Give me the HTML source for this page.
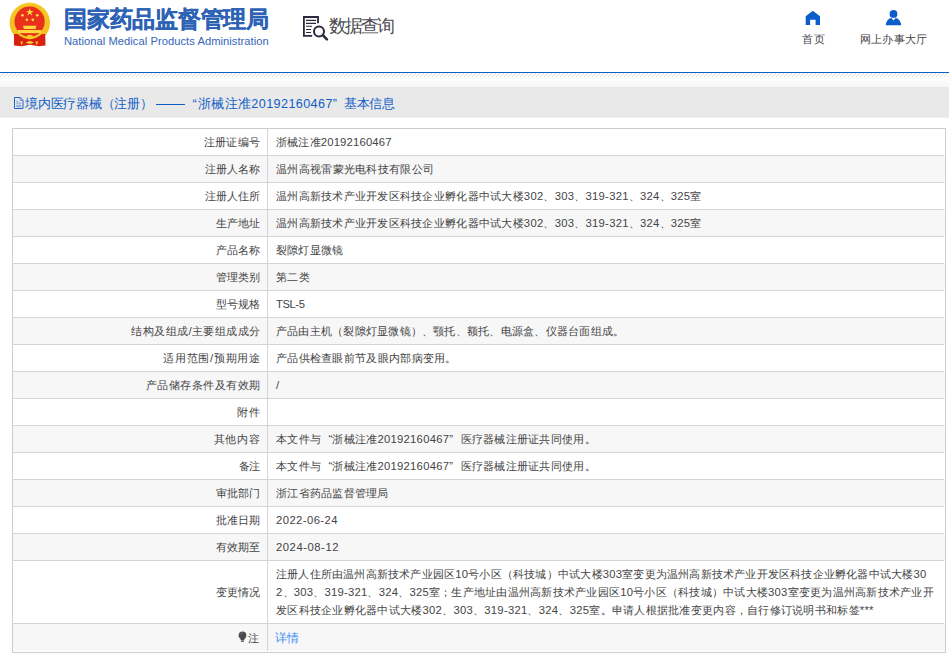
<!DOCTYPE html>
<html><head><meta charset="utf-8">
<style>
*{margin:0;padding:0;box-sizing:border-box}
html,body{width:949px;height:655px;overflow:hidden;background:#fff;font-family:"Liberation Sans",sans-serif}
div,svg{position:absolute}
.emblem{left:0;top:0}
.t1{left:64px;top:4px;-webkit-text-stroke:0.3px #2d62b5;font-size:22.5px;font-weight:bold;color:#2d62b5;white-space:nowrap;line-height:32px;letter-spacing:-0.250px;}
.t2{left:64px;top:34.2px;font-size:11.2px;color:#3466b9;white-space:nowrap;line-height:14px;letter-spacing:0.036px;}
.dq{left:302px;top:15px}
.dqt{left:328.8px;top:13.8px;font-size:18px;color:#4a4a50;white-space:nowrap;line-height:24px;letter-spacing:-1.900px;}
.nav{top:29.8px;font-size:11.25px;color:#444;white-space:nowrap;line-height:18px}
.blue{left:0;top:72px;width:949px;height:1px;background:#0d5fc0}
.stripe{left:0;top:73px;width:949px;height:4px}
.grad{left:0;top:77px;width:949px;height:10px;background:linear-gradient(#fff,#f6f6f6)}
.band{left:0;top:87px;width:949px;height:30px;background:#e9e9e9}
.bt{left:25px;top:94.7px;font-size:12.6px;color:#0f5ec7;white-space:nowrap;line-height:19px;}
.q1{margin-left:7.3px} .q2{margin-right:7.3px}
.bicon{left:13px;top:96px}
.bandb{left:0;top:117px;width:949px;height:1px;background:#eef0f6}
.tbl{left:12px;top:128px;width:934px;height:525px;border:1px solid #cdcccf;background:#fff}
.bg{left:13px;width:932px;background:#f7f7f7}
.hl{left:13px;width:931px;height:1px;background:#d4d4d6}
.vd{left:267px;top:129px;width:1px;height:522px;background:#d4d4d6}
.lb{right:689px;font-size:11.25px;line-height:18px;color:#444;white-space:nowrap;text-align:right}
.vl{left:276px;font-size:11.25px;line-height:18px;color:#444;white-space:nowrap}
.bulb{position:static;display:inline-block;margin-right:1px;vertical-align:0px}
</style></head><body>
<svg class="emblem" viewBox="0 0 60 50" width="60" height="50">
<defs><radialGradient id="gd" cx="50%" cy="35%" r="65%"><stop offset="0" stop-color="#ffd640"/><stop offset="1" stop-color="#f2bb1c"/></radialGradient></defs>
<circle cx="29.8" cy="22.8" r="20.2" fill="url(#gd)"/>
<path d="M14 34 L45.2 34 L45.5 45.6 L38.5 46.2 L30 44.8 L21.5 46.2 L14 45.6 Z" fill="#d8210f"/>
<circle cx="29.7" cy="21.8" r="17.2" fill="#f3c21e"/>
<circle cx="29.6" cy="21.6" r="15.1" fill="#e8301d"/>
<g fill="#ffd83c">
<polygon points="29.8,8.2 30.75,10.9 33.6,10.9 31.3,12.6 32.2,15.4 29.8,13.7 27.4,15.4 28.3,12.6 26,10.9 28.85,10.9"/>
<circle cx="22.4" cy="15.3" r="1.35"/><circle cx="26.9" cy="19.8" r="1.35"/><circle cx="32.8" cy="19.8" r="1.35"/><circle cx="37.3" cy="15.3" r="1.35"/>
<path d="M22.8 25.8 H36.6 L35.8 27.2 V29 H23.6 V27.2 Z"/>
<rect x="17.9" y="30" width="23.5" height="3.1"/>
</g>
<path d="M25.6 37.5 Q27 34.6 29.8 34.8 Q32.6 34.6 34 37.5 Q31.5 39.6 29.8 39.3 Q28.1 39.6 25.6 37.5 Z" fill="#f7cb2a"/>
<path d="M25.8 42.8 Q29.8 39.2 33.8 42.8 Q29.8 44.8 25.8 42.8 Z" fill="#f9d33a"/>
<path d="M20.3 41.6 L23 41.6 L21.8 45.6 Z M35.4 41.6 L38.2 41.6 L36.8 45.6 Z" fill="#f5c82c"/>
</svg>
<div class="t1" id="t1">国家药品监督管理局</div>
<div class="t2" id="t2">National Medical Products Administration</div>
<svg class="dq" viewBox="0 0 30 28" width="30" height="28">
<g fill="none" stroke="#2b2a3d">
<path d="M10.2 20.8 H1.9 V2 H16 V8.2" stroke-width="1.8"/>
<path d="M4 5.4H14M4 8.4H14M4 11.3H10M4 14.5H9M4 17.5H9" stroke-width="1.1"/>
<circle cx="17" cy="16.4" r="5" stroke-width="2"/>
<path d="M20.8 20.2 L24.9 24.4" stroke-width="2.6" stroke-linecap="round"/>
</g></svg>
<div class="dqt" id="dqt">数据查询</div>
<svg style="left:805px;top:10px" width="16" height="16" viewBox="0 0 16 16"><path d="M0.7 6.3 L7.8 0.7 L15 6.3 V14.9 H10.6 V9.8 H5.1 V14.9 H0.7 Z" fill="#0b5dcc"/></svg>
<div class="nav" id="n1" style="left:801.5px;letter-spacing:1.000px;">首页</div>
<svg style="left:885px;top:9px" width="17" height="17" viewBox="0 0 17 17"><circle cx="8.5" cy="4.9" r="3.9" fill="#0b5dcc"/><path d="M0.8 16.2 C1.2 11.5 4 9.3 6.3 9 L8.5 11.6 L10.7 9 C13 9.3 15.8 11.5 16.2 16.2 Z" fill="#0b5dcc"/></svg>
<div class="nav" id="n2" style="left:860px;letter-spacing:0.240px;">网上办事大厅</div>
<div class="blue"></div>
<svg class="stripe" width="949" height="4"><defs><pattern id="sp" width="4" height="4" patternUnits="userSpaceOnUse"><path d="M-1 5 L5 -1" stroke="#dedede" stroke-width="1"/></pattern></defs><rect width="949" height="4" fill="url(#sp)"/></svg>
<div class="grad"></div>
<div class="band"></div><div class="bandb"></div>
<svg class="bicon" width="12" height="14" viewBox="0 0 12 14"><path d="M1.5 1.5 H7.2 L10 4.3 V12.5 H1.5 Z" fill="none" stroke="#1f63cc" stroke-width="1"/><path d="M7 1.5 V4.5 H10" fill="none" stroke="#5b86d6" stroke-width="0.8"/><path d="M3.2 5.3H5M3.2 7.1H8.3M3.2 9.3H8.3M3.2 10.8H8.3" stroke="#6f95dc" stroke-width="0.9"/></svg>
<div class="bt" id="bA" style="left:25px;letter-spacing:-0.244px;">境内医疗器械（注册）</div>
<div style="left:156.4px;top:104px;width:28.4px;height:1px;background:#0f5ec7"></div>
<div class="bt" id="bC" style="left:192.5px;letter-spacing:0.406px;"><span style="margin-right:0.6px">“</span>浙械注准20192160467”</div>
<div class="bt" id="bD" style="left:344px;letter-spacing:-0.500px;">基本信息</div>
<div class="tbl"></div>
<div class="bg" style="top:156px;height:26px"></div>
<div class="bg" style="top:210px;height:26px"></div>
<div class="bg" style="top:264px;height:26px"></div>
<div class="bg" style="top:318px;height:26px"></div>
<div class="bg" style="top:372px;height:26px"></div>
<div class="bg" style="top:426px;height:26px"></div>
<div class="bg" style="top:480px;height:26px"></div>
<div class="bg" style="top:534px;height:26px"></div>
<div class="bg" style="top:624px;height:27px"></div>
<div class="hl" style="top:155px"></div>
<div class="hl" style="top:182px"></div>
<div class="hl" style="top:209px"></div>
<div class="hl" style="top:236px"></div>
<div class="hl" style="top:263px"></div>
<div class="hl" style="top:290px"></div>
<div class="hl" style="top:317px"></div>
<div class="hl" style="top:344px"></div>
<div class="hl" style="top:371px"></div>
<div class="hl" style="top:398px"></div>
<div class="hl" style="top:425px"></div>
<div class="hl" style="top:452px"></div>
<div class="hl" style="top:479px"></div>
<div class="hl" style="top:506px"></div>
<div class="hl" style="top:533px"></div>
<div class="hl" style="top:560px"></div>
<div class="hl" style="top:623px"></div>
<div class="lb" id="l0" style="top:133px;letter-spacing:0.350px;margin-right:-0.350px;">注册证编号</div>
<div class="vl" id="v0" style="top:133px;letter-spacing:0.193px;">浙械注准20192160467</div>
<div class="lb" id="l1" style="top:160px;">注册人名称</div>
<div class="vl" id="v1" style="top:160px;letter-spacing:0.308px;">温州高视雷蒙光电科技有限公司</div>
<div class="lb" id="l2" style="top:187px;">注册人住所</div>
<div class="vl" id="v2" style="top:187px;letter-spacing:0.267px;">温州高新技术产业开发区科技企业孵化器中试大楼302、303、319-321、324、325室</div>
<div class="lb" id="l3" style="top:214px;">生产地址</div>
<div class="vl" id="v3" style="top:214px;letter-spacing:0.267px;">温州高新技术产业开发区科技企业孵化器中试大楼302、303、319-321、324、325室</div>
<div class="lb" id="l4" style="top:241px;">产品名称</div>
<div class="vl" id="v4" style="top:241px;letter-spacing:0.200px;">裂隙灯显微镜</div>
<div class="lb" id="l5" style="top:268px;">管理类别</div>
<div class="vl" id="v5" style="top:268px;letter-spacing:0.250px;">第二类</div>
<div class="lb" id="l6" style="top:295px;">型号规格</div>
<div class="vl" id="v6" style="top:295px;letter-spacing:-0.425px;">TSL-5</div>
<div class="lb" id="l7" style="top:322px;letter-spacing:0.409px;margin-right:-0.409px;">结构及组成/主要组成成分</div>
<div class="vl" id="v7" style="top:322px;letter-spacing:0.233px;">产品由主机（裂隙灯显微镜）、颚托、额托、电源盒、仪器台面组成。</div>
<div class="lb" id="l8" style="top:349px;letter-spacing:0.688px;margin-right:-0.688px;">适用范围/预期用途</div>
<div class="vl" id="v8" style="top:349px;letter-spacing:0.293px;">产品供检查眼前节及眼内部病变用。</div>
<div class="lb" id="l9" style="top:376px;letter-spacing:0.444px;margin-right:-0.444px;">产品储存条件及有效期</div>
<div class="vl" id="v9" style="top:376px;">/</div>
<div class="lb" id="l10" style="top:403px;letter-spacing:1.500px;margin-right:-1.500px;">附件</div>
<div class="lb" id="l11" style="top:430px;letter-spacing:0.767px;margin-right:-0.767px;">其他内容</div>
<div class="vl" id="v11" style="top:430px;letter-spacing:0.269px;">本文件与<span class="q1">“</span>浙械注准20192160467<span class="q2">”</span>医疗器械注册证共同使用。</div>
<div class="lb" id="l12" style="top:457px;letter-spacing:-1.400px;margin-right:1.400px;">备注</div>
<div class="vl" id="v12" style="top:457px;letter-spacing:0.269px;">本文件与<span class="q1">“</span>浙械注准20192160467<span class="q2">”</span>医疗器械注册证共同使用。</div>
<div class="lb" id="l13" style="top:484px;">审批部门</div>
<div class="vl" id="v13" style="top:484px;letter-spacing:0.256px;">浙江省药品监督管理局</div>
<div class="lb" id="l14" style="top:511px;">批准日期</div>
<div class="vl" id="v14" style="top:511px;letter-spacing:0.433px;">2022-06-24</div>
<div class="lb" id="l15" style="top:538px;">有效期至</div>
<div class="vl" id="v15" style="top:538px;letter-spacing:0.544px;">2024-08-12</div>
<div class="lb" id="l16" style="top:583px;">变更情况</div>
<div class="vl" id="m0" style="top:565px;letter-spacing:0.207px;">注册人住所由温州高新技术产业园区10号小区（科技城）中试大楼303室变更为温州高新技术产业开发区科技企业孵化器中试大楼30</div>
<div class="vl" id="m1" style="top:583px;letter-spacing:0.245px;">2、303、319-321、324、325室；生产地址由温州高新技术产业园区10号小区（科技城）中试大楼303室变更为温州高新技术产业开</div>
<div class="vl" id="m2" style="top:601px;letter-spacing:0.274px;">发区科技企业孵化器中试大楼302、303、319-321、324、325室。申请人根据批准变更内容，自行修订说明书和标签***</div>
<div class="lb" id="l17" style="top:629px;margin-right:1px"><svg class="bulb" width="9" height="11" viewBox="0 0 9 11"><path d="M4.5 0.6 C6.9 0.6 8.4 2.3 8.4 4.4 C8.4 6.1 7.2 7 6.4 8.1 V9.3 H2.6 V8.1 C1.8 7 0.6 6.1 0.6 4.4 C0.6 2.3 2.1 0.6 4.5 0.6 Z" fill="#4a4a4f"/><rect x="3" y="9.6" width="3" height="1.2" fill="#4a4a4f"/><path d="M2.6 3.2 Q3.2 1.9 4.6 1.7" stroke="#9a9aa0" stroke-width="0.7" fill="none"/></svg>注</div>
<div class="vl" id="v17" style="top:628.5px;margin-left:-1px;font-size:12px;color:#3d8bf5;letter-spacing:0.100px;">详情</div>
<div class="vd"></div>
</body></html>
